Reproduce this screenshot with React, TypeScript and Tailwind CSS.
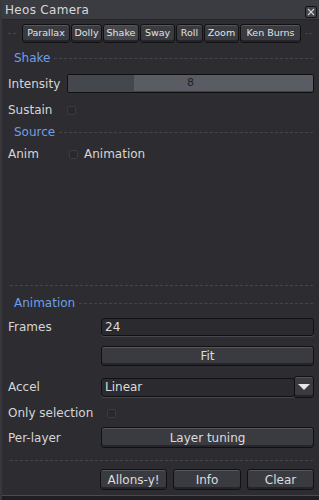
import { ReactNode } from "react";

const FONT = { fontFamily: '"DejaVu Sans", "Liberation Sans", sans-serif' };

function Btn({ children, className = "", active = false }: { children: ReactNode; className?: string; active?: boolean }) {
  return (
    <div
      className={`flex items-center justify-center whitespace-nowrap rounded-[3px] border border-[#111114] text-[#dcdcdc] shadow-[inset_0_1px_0_#56575d,inset_0_-2px_0_#26262a] ${
        active ? "bg-[#45464c]" : "bg-[#3a3b41]"
      } ${className}`}
    >
      {children}
    </div>
  );
}

function Tab({ label, active, w }: { label: string; active?: boolean; w: string }) {
  return (
    <Btn active={active} className={`h-[19px] ${w} text-[9.5px] text-[#e2e2e2]`}>
      {label}
    </Btn>
  );
}

function Header({ label }: { label: string }) {
  return (
    <div className="flex items-center pl-[12px] pr-[6px]">
      <span className="text-[#6f9fe6] text-[12px]">{label}</span>
      <div className="flex-1 ml-[4px] border-t border-dashed border-[#46454b]" />
    </div>
  );
}

function Check() {
  return <div className="w-[9px] h-[9px] rounded-[2px] border border-[#3c3b41] bg-[#29282d]" />;
}

function Field({ children, className = "" }: { children: ReactNode; className?: string }) {
  return (
    <div
      className={`flex items-center rounded-[3px] border border-[#111114] bg-[#2b2a2f] px-[3px] text-[#dcdcdc] shadow-[0_1px_0_#48474d] ${className}`}
    >
      {children}
    </div>
  );
}

function Row({ label, children, className = "" }: { label?: string; children: ReactNode; className?: string }) {
  return (
    <div className={`flex items-center pl-[6px] pr-[5px] ${className}`}>
      <span className="w-[93px] shrink-0">{label}</span>
      <div className="flex-1">{children}</div>
    </div>
  );
}

export default function App() {
  return (
    <div
      style={FONT}
      className="w-[319px] h-[500px] bg-[#2d2c31] text-[#d6d6d6] text-[12px] flex flex-col border-l-2 border-[#38373d] overflow-hidden"
    >
      {/* title bar */}
      <div className="h-[20px] bg-[#3b3c42] flex items-center justify-between pl-[3px] pr-[2px] border-b border-[#27262b]">
        <span className="text-[12px] tracking-[0.3px] text-[#d8d8d8]">Heos Camera</span>
        <div className="mt-[4px] w-[12px] h-[12px] rounded-[2px] border border-[#111114] bg-[#44454b] flex items-center justify-center">
          <svg width="8" height="8" viewBox="0 0 8 8">
            <path d="M1 1 L7 7 M7 1 L1 7" stroke="#cfcfcf" strokeWidth="1.2" />
          </svg>
        </div>
      </div>

      {/* tabs */}
      <div className="flex items-center mt-[4px] pl-[6px] pr-[7px]">
        <div className="w-[8px] border-t border-dashed border-[#46454b] mr-[6px]" />
        <div className="flex gap-[1px]">
          <Tab label="Parallax" w="w-[48px]" />
          <Tab label="Dolly" w="w-[31px]" />
          <Tab label="Shake" w="w-[36px]" active />
          <Tab label="Sway" w="w-[35px]" />
          <Tab label="Roll" w="w-[27px]" />
          <Tab label="Zoom" w="w-[35px]" />
          <Tab label="Ken Burns" w="w-[61px]" />
        </div>
        <div className="flex-1 border-t border-dashed border-[#46454b] ml-[4px]" />
      </div>

      <div className="mt-[6px]">
        <Header label="Shake" />
      </div>

      <div className="grid grid-cols-[59px_1fr] items-center pl-[6px] pr-[5px] mt-[7px] gap-y-[8px]">
        <span>Intensity</span>
        <div className="h-[19px] rounded-[2px] border border-[#101013] bg-[#595c63] relative flex items-center justify-center shadow-[inset_0_-1px_0_#3d3f45]">
          <div className="absolute left-0 top-0 bottom-0 w-[66px] bg-[#45474e]" />
          <span className="relative text-[#222226] text-[11px]">8</span>
        </div>
        <span>Sustain</span>
        <Check />
      </div>

      <div className="mt-[4px]">
        <Header label="Source" />
      </div>

      <div className="grid grid-cols-[61px_auto_1fr] items-center pl-[6px] mt-[4px]">
        <span>Anim</span>
        <Check />
        <span className="ml-[6px]">Animation</span>
      </div>

      <div className="flex-1" />

      <div className="mx-[8px] mr-[6px] border-t border-dashed border-[#46454b]" />
      <div className="mt-[8px]">
        <Header label="Animation" />
      </div>

      <Row label="Frames" className="mt-[6px]">
        <Field className="h-[18px]">24</Field>
      </Row>
      <Row className="mt-[10px]">
        <Btn className="h-[20px]">Fit</Btn>
      </Row>
      <Row label="Accel" className="mt-[10px]">
        <div className="flex items-center">
          <Field className="h-[19px] flex-1">Linear</Field>
          <Btn className="w-[20px] h-[22px] -ml-[1px]">
            <svg width="12" height="8" viewBox="0 0 12 8">
              <path d="M0 1 H12 L6 7 Z" fill="#e6e6e6" />
            </svg>
          </Btn>
        </div>
      </Row>
      <Row label="Only selection" className="mt-[8px] h-[14px]">
        <div className="pl-[6px]">
          <Check />
        </div>
      </Row>
      <Row label="Per-layer" className="mt-[7px]">
        <Btn className="h-[21px]">Layer tuning</Btn>
      </Row>

      <div className="mx-[8px] mr-[6px] mt-[12px] border-t border-dashed border-[#46454b]" />

      <div className="flex justify-end gap-[6px] pr-[5px] mt-[8px]">
        <Btn className="w-[67px] h-[21px]">Allons-y!</Btn>
        <Btn className="w-[68px] h-[21px]">Info</Btn>
        <Btn className="w-[67px] h-[21px]">Clear</Btn>
      </div>

      <div className="flex-none h-[5px]" />
      <div className="h-[1px] bg-[#4a4a52]" />
      <div className="h-[4px] bg-[#1f1e22]" />
    </div>
  );
}
